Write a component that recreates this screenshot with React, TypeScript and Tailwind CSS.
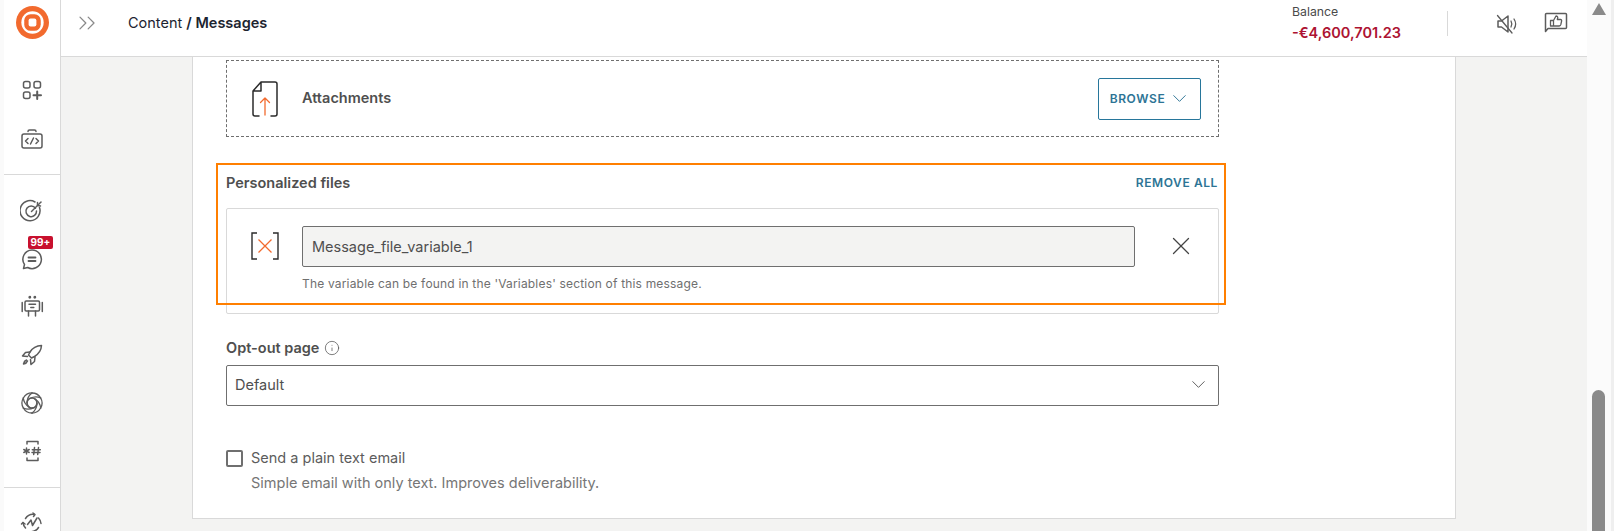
import { ChevronDown, ChevronsRight, Info, X } from 'lucide-react'
import type { ReactNode } from 'react'

function Ico({ children, size = 24 }: { children: ReactNode; size?: number }) {
    return (
        <svg width={size} height={size} viewBox="0 0 24 24" fill="none" stroke="#5c5c5c" strokeWidth="1.5" strokeLinecap="round" strokeLinejoin="round">
            {children}
        </svg>
    )
}

function Logo() {
    return (
        <svg width="33" height="33" viewBox="0 0 34 34" fill="none">
            <circle cx="17" cy="17" r="17" fill="#f26a2e" />
            <circle cx="17" cy="17" r="11.5" fill="#ffffff" />
            <rect x="8.5" y="8.5" width="17" height="17" rx="6.5" fill="#f26a2e" />
            <rect x="13" y="13" width="8" height="8" rx="2" fill="#ffffff" />
        </svg>
    )
}

const blades = [0, 60, 120, 180, 240, 300]

const sectionOne = [
    <Ico key="apps">
        <rect x="3.5" y="3.5" width="6.5" height="6.5" rx="2" />
        <rect x="14" y="3.5" width="6.5" height="6.5" rx="2" />
        <rect x="3.5" y="14" width="6.5" height="6.5" rx="2" />
        <path d="M17.2 13.5v7.5M13.5 17.2h7.5" strokeWidth="2" />
    </Ico>,
    <Ico key="code">
        <rect x="2" y="7" width="20" height="14" rx="2" />
        <path d="M8 4.500A1.500 1.500 0 0 1 9.500 3h5A1.500 1.500 0 0 1 16 4.500" />
        <path d="M8 11.500 5.500 14 8 16.500M16 11.500l2.500 2.500-2.500 2.500M13.500 11l-3 6" />
    </Ico>,
]

const sectionTwo = [
    <Ico key="target">
        <path d="M19.500 8.500A10 10 0 1 1 15 3" />
        <path d="M15.500 9.200A5.300 5.300 0 1 0 16.500 12" />
        <path d="M11.500 12.500 21 3" />
        <path d="M17.500 3.500v3l3 .500" />
    </Ico>,
    <div key="chat" className="relative flex items-center justify-center">
        <Ico>
            <path d="M12 3a9.300 9.300 0 1 1-4.300 17.500L3.500 21.500l1-4A9.300 9.300 0 0 1 12 3z" />
            <path d="M8.500 10.500h7M8.500 14h7" strokeWidth="1.800" />
        </Ico>
        <span className="absolute left-[8px] top-[-11px] flex h-[13px] w-[25px] items-center justify-center rounded-[2px] bg-[#c8102e] text-[10px] font-bold text-white">
            99+
        </span>
    </div>,
    <Ico key="bot">
        <rect x="5" y="6" width="14.500" height="10" rx="1.200" />
        <path d="M2.200 7.500v9M22.300 7.500v9M8.500 16v5M15.500 16v5M9 9.200h6.500M10.800 12.500h3" />
        <circle cx="9.800" cy="2.300" r=".7" fill="#5c5c5c" />
        <circle cx="14.800" cy="2.300" r=".7" fill="#5c5c5c" />
    </Ico>,
    <Ico key="rocket">
        <path d="M21.500 2.500c-5 .3-9 2.500-11.500 6.500l-1.500 3 3 3 3-1.500c4-2.500 6.700-6 7-11z" />
        <path d="M10 9 5.500 9.500 2.500 13l5 .5M15 14l-.5 4.500-3.500 3-.5-5" />
        <path d="M6.500 17c-1.500.5-2.500 1.500-3 4 2.500-.5 3.500-1.500 4-3" />
    </Ico>,
    <Ico key="ai">
        <circle cx="12" cy="12" r="5" strokeWidth="1.700" />
        {blades.map(deg => (
            <g key={deg} transform={`rotate(${deg} 12 12)`}>
                <path d="M12 2A10 10 0 0 1 20.700 7" strokeWidth="1.300" />
                <path d="M12 2C9 4 7.300 7 7 11.500" strokeWidth="1.300" />
            </g>
        ))}
    </Ico>,
    <Ico key="hash">
        <path d="M7 5V2.500h11V5M7 19v2.500h11V19" />
        <path d="M6.500 9v6M3.800 10.500l5.400 3M9.200 10.500l-5.400 3M14.500 8.500l-.8 7M18.500 8.500l-.8 7M12.300 10.700h8M12 13.400h8" />
    </Ico>,
]

function Sidebar() {
    return (
        <aside className="flex h-full w-[57px] shrink-0 flex-col overflow-hidden border-r border-[#d9d9d9] bg-white">
            <div className="flex h-[65px] shrink-0 justify-center pt-[6px]">
                <Logo />
            </div>
            <div className="flex flex-col border-b border-[#d9d9d9] pb-[11px]">
                {sectionOne.map((icon, i) => (
                    <div key={i} className="flex h-[49px] items-center justify-center">
                        {icon}
                    </div>
                ))}
            </div>
            <div className="flex flex-col border-b border-[#d9d9d9] py-[12px]">
                {sectionTwo.map((icon, i) => (
                    <div key={i} className="flex h-12 items-center justify-center">
                        {icon}
                    </div>
                ))}
            </div>
            <div className="mt-[11px] flex h-12 shrink-0 items-center justify-center">
                <Ico>
                    <path d="M5.500 7.500A9 9 0 0 1 14 3.300M18.500 7a9 9 0 0 1 2.500 5.500M18.500 16.500A9 9 0 0 1 10 20.700M5.500 17A9 9 0 0 1 3 11.500" />
                    <path d="M7.500 13.500 11 9l1.500 5.500L17 7M13 2l2 1.500-1.500 2M1.500 13 3 11.500l2 1.500" />
                </Ico>
            </div>
        </aside>
    )
}

function Header() {
    return (
        <header className="flex h-[57px] shrink-0 items-center border-b border-[#d9d9d9] bg-white pb-[10px] pl-[12px]">
            <ChevronsRight size={28} strokeWidth={1.1} color="#8a8a8a" />
            <div className="ml-[27px] text-[14.5px] text-[#1c2430]">
                Content <span className="font-semibold">/ Messages</span>
            </div>
            <div className="ml-auto flex items-center">
                <div className="w-[155px]">
                    <div className="text-[12.3px] leading-[16px] text-[#4a4a4a]">Balance</div>
                    <div className="mt-[4px] text-[14.5px] font-semibold leading-[18px] text-[#ad1332]">-€4,600,701.23</div>
                </div>
                <div className="h-[25px] w-px bg-[#d9d9d9]" />
                <div className="ml-[47px] mt-[1px] flex items-center">
                    <Ico>
                        <path d="M3 9h3.500L13 4v16l-6.500-5H3z" />
                        <path d="M2.500 3.500 17 21M16 9c1 1.800 1 4.200 0 6M19 7c2 3 2 7 0 10" strokeWidth="1.300" />
                    </Ico>
                </div>
                <div className="ml-[25px] mr-[19px] flex items-center">
                    <Ico>
                        <path d="M1.500 20.500V3.500a1 1 0 0 1 1-1h19a1 1 0 0 1 1 1v13a1 1 0 0 1-1 1H4z" />
                        <path d="M6.500 9.500h3v5.500h-3zM9.500 9.500 12 5c1.300 0 2 .8 1.700 2l-.4 1.500h3.200c.8 0 1.300.7 1.100 1.500l-.8 3.700c-.2.800-.7 1.300-1.500 1.300H9.500" strokeWidth="1.300" />
                    </Ico>
                </div>
            </div>
        </header>
    )
}

function AttachmentsBox() {
    return (
        <div className="flex h-[77px] items-center border border-dashed border-[#6f6f6f] pl-[25px] pr-[17px]">
            <svg width="26" height="36" viewBox="0 0 26 36" fill="none" strokeLinecap="round" strokeLinejoin="round">
                <path d="M1 10 9 1h14a2 2 0 0 1 2 2v2M25 5v28a2 2 0 0 1-2 2h-4M7 35H3a2 2 0 0 1-2-2V10h8V1" stroke="#2b2b2b" strokeWidth="1.500" />
                <path d="M13 34V17M8.500 21.500 13 17l4.500 4.500" stroke="#f26a2e" strokeWidth="1.300" />
            </svg>
            <span className="mb-[2px] ml-[24px] text-[14.5px] font-semibold text-[#4f4f4f]">Attachments</span>
            <button className="ml-auto flex h-[42px] w-[103px] items-center justify-center gap-[3px] rounded-[2px] border border-[#27769b] pl-[2px] text-[12px] font-semibold tracking-[0.05em] text-[#2d7495]">
                BROWSE
                <ChevronDown size={23} strokeWidth={1} />
            </button>
        </div>
    )
}

function PersonalizedFiles() {
    return (
        <>
            <div className="mt-[35px] flex h-[20px] items-center justify-between">
                <span className="pt-[1px] text-[14.5px] font-semibold text-[#4f4f4f]">Personalized files</span>
                <span className="mr-[1px] mt-[1px] text-[12px] font-semibold tracking-[0.05em] text-[#2d7495]">REMOVE ALL</span>
            </div>
            <div className="mt-[16px] h-[106px] rounded-[2px] border border-[#d9d9d9] pl-[24px] pr-[22px] pt-[17px]">
                <div className="flex items-start">
                    <svg width="28" height="28" viewBox="0 0 28 28" fill="none" className="mt-[6px]">
                        <path d="M6 1H1v26h5M22 1h5v26h-5" stroke="#2b2b2b" strokeWidth="1.400" />
                        <path d="M7.500 7.500 20.500 20.500M20.500 7.500 7.500 20.500" stroke="#f26a2e" strokeWidth="1.300" />
                    </svg>
                    <div className="ml-[23px] flex-1">
                        <div className="flex h-[41px] items-center rounded-[2px] border border-[#6f6f6f] bg-[#f3f3f2] pl-[9px] text-[14.5px] text-[#4f4f4f]">
                            Message_file_variable_1
                        </div>
                        <p className="mt-[9px] text-[12px] leading-[16px] tracking-[0.18px] text-[#6f6f6f]">
                            The variable can be found in the 'Variables' section of this message.
                        </p>
                    </div>
                    <X size={30} strokeWidth={1} color="#444444" className="ml-[31px] mt-[5px]" />
                </div>
            </div>
        </>
    )
}

function OptOut() {
    return (
        <>
            <div className="mt-[24px] flex h-[20px] items-center gap-[5px]">
                <span className="text-[14.5px] font-semibold text-[#4f4f4f]">Opt-out page</span>
                <Info size={16} strokeWidth={1.1} color="#4f4f4f" />
            </div>
            <div className="mt-[7px] flex h-[41px] items-center justify-between rounded-[2px] border border-[#6f6f6f] pb-[2px] pl-[8px] pr-[8px] text-[14.5px] text-[#4f4f4f]">
                Default
                <ChevronDown size={23} strokeWidth={1} color="#5c5c5c" />
            </div>
            <div className="mt-[40px] flex gap-[8px]">
                <div className="mt-[4px] h-[17px] w-[17px] shrink-0 rounded-[2px] border-2 border-[#6f6f6f]" />
                <div>
                    <div className="text-[14.5px] leading-[24px] text-[#5c5c5c]">Send a plain text email</div>
                    <div className="mt-[1px] text-[14.5px] leading-[24px] text-[#767676]">Simple email with only text. Improves deliverability.</div>
                </div>
            </div>
        </>
    )
}

function Scrollbar() {
    return (
        <div className="relative h-full w-[24px] shrink-0 bg-[#fbfbfb]">
            <div className="mx-auto mt-[3px] h-0 w-0 border-x-[7px] border-b-[12px] border-x-transparent border-b-[#8a8a8a]" />
            <div className="absolute left-[5px] top-[390px] h-[141px] w-[13px] rounded-t-full bg-[#8a8a8a]" />
        </div>
    )
}

export default function App() {
    return (
        <div className="flex h-[531px] w-[1614px] overflow-hidden bg-white font-['Inter',sans-serif]">
            <div className="w-[4px] shrink-0 bg-[#fafafa]" />
            <Sidebar />
            <div className="flex w-[1526px] shrink-0 flex-col">
                <Header />
                <main className="flex-1 bg-[#f3f3f2] pl-[131px]">
                    <section className="relative h-[462px] w-[1264px] border-x border-b border-[#d9d9d9] bg-white pl-[33px] pr-[236px] pt-[3px]">
                        <AttachmentsBox />
                        <PersonalizedFiles />
                        <OptOut />
                        {/* annotation drawn over the form */}
                        <div className="absolute left-[23px] top-[106px] h-[142px] w-[1010px] border-2 border-[#ff7f00]" />
                    </section>
                </main>
            </div>
            <Scrollbar />
            <div className="w-[3px] shrink-0 bg-[#efefef]" />
        </div>
    )
}
